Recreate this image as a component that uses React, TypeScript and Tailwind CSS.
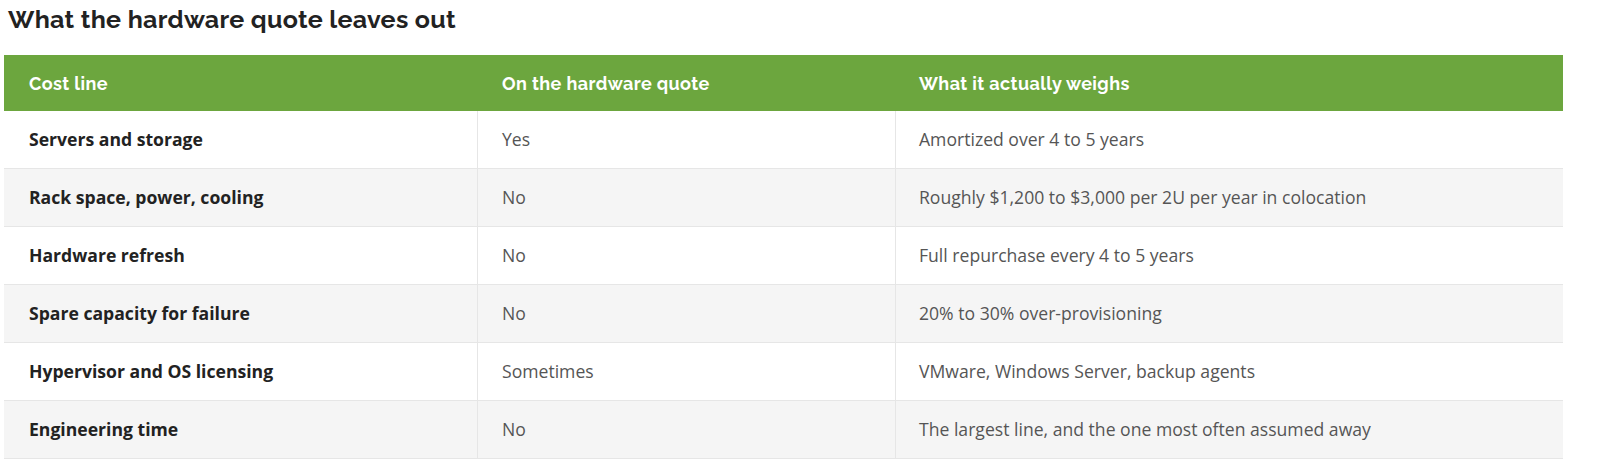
import React from "react"

const rows: Array<[string, string, string]> = [
	["Servers and storage", "Yes", "Amortized over 4 to 5 years"],
	["Rack space, power, cooling", "No", "Roughly $1,200 to $3,000 per 2U per year in colocation"],
	["Hardware refresh", "No", "Full repurchase every 4 to 5 years"],
	["Spare capacity for failure", "No", "20% to 30% over-provisioning"],
	["Hypervisor and OS licensing", "Sometimes", "VMware, Windows Server, backup agents"],
	["Engineering time", "No", "The largest line, and the one most often assumed away"],
]

export default function App() {
	return (
		<div className="bg-white w-[1600px] h-[471px] pl-1 pt-[3px]">
			<h2 className="pl-1 text-[25px] leading-[32px] font-bold text-[#222] tracking-[0.3px]" style={{ fontFamily: "Raleway, Lato, 'Open Sans', sans-serif" }}>
				What the hardware quote leaves out
			</h2>
			<div className="mt-[20px] w-[1559px]" style={{ fontFamily: "'Open Sans', sans-serif" }}>
				<div className="grid grid-cols-[473px_418px_1fr] h-[56px] items-center bg-[#6ca63e] text-white font-bold text-[18px] tracking-[0.4px]" style={{ fontFamily: "Raleway, Lato, sans-serif" }}>
					<div className="pl-[25px]">Cost line</div>
					<div className="pl-[25px]">On the hardware quote</div>
					<div className="pl-[24px]">What it actually weighs</div>
				</div>
				{rows.map((r, i) => (
					<div key={i} className={`grid grid-cols-[473px_418px_1fr] h-[58px] border-b border-[#e6e6e6] text-[17.6px] ${i % 2 ? "bg-[#f5f5f5]" : "bg-white"}`}>
						<div className="flex items-center pl-[25px] font-bold text-[#222]">{r[0]}</div>
						<div className="flex items-center pl-[24px] border-l border-[#e6e6e6] text-[#555]">{r[1]}</div>
						<div className="flex items-center pl-[23px] border-l border-[#e6e6e6] text-[#555]">{r[2]}</div>
					</div>
				))}
			</div>
		</div>
	)
}
